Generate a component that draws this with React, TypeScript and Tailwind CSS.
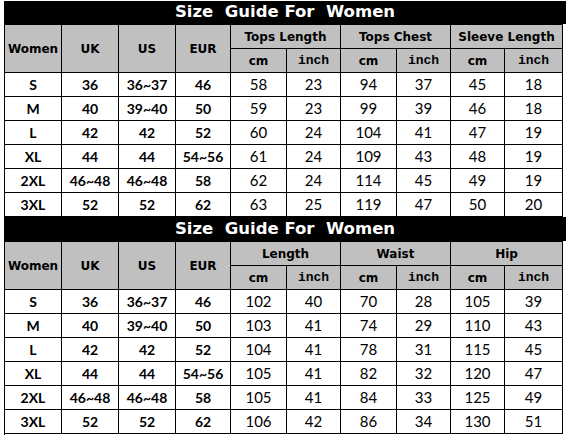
import React from 'react';

type Row = [string, string, string, string, number, number, number, number, number, number];

const sizes = ['S', 'M', 'L', 'XL', '2XL', '3XL'];
const uk = ['36', '40', '42', '44', '46~48', '52'];
const us = ['36~37', '39~40', '42', '44', '46~48', '52'];
const eur = ['46', '50', '52', '54~56', '58', '62'];

const tops: number[][] = [
  [58, 23, 94, 37, 45, 18],
  [59, 23, 99, 39, 46, 18],
  [60, 24, 104, 41, 47, 19],
  [61, 24, 109, 43, 48, 19],
  [62, 24, 114, 45, 49, 19],
  [63, 25, 119, 47, 50, 20],
];

const bottoms: number[][] = [
  [102, 40, 70, 28, 105, 39],
  [103, 41, 74, 29, 110, 43],
  [104, 41, 78, 31, 115, 45],
  [105, 41, 82, 32, 120, 47],
  [105, 41, 84, 33, 125, 49],
  [106, 42, 86, 34, 130, 51],
];

const build = (m: number[][]): Row[] =>
  m.map((r, i) => [sizes[i], uk[i], us[i], eur[i], ...r] as Row);

const colWidths = [57, 57, 57, 55, 56, 54, 56, 54, 54, 58];

const head = "font-['DejaVu_Sans',sans-serif] font-bold text-[12px] text-black";
const cell = 'border border-black text-center p-0';

function SizeTable({ groups, rows, titleH }: { groups: string[]; rows: Row[]; titleH: string }) {
  return (
    <div>
      <div className={`${titleH} bg-black flex items-center justify-center`}>
        <span className="whitespace-pre text-white font-['DejaVu_Sans',sans-serif] font-bold text-[16.5px] leading-none">
          {'Size  Guide For  Women'}
        </span>
      </div>
      <table className="table-fixed border-collapse w-[558px]">
        <colgroup>
          {colWidths.map((w, i) => (
            <col key={i} style={{ width: w }} />
          ))}
        </colgroup>
        <thead>
          <tr className="h-[24px] bg-[#c0c0c0]">
            {['Women', 'UK', 'US', 'EUR'].map((h) => (
              <th key={h} rowSpan={2} className={`${cell} ${head}`}>
                {h}
              </th>
            ))}
            {groups.map((g) => (
              <th key={g} colSpan={2} className={`${cell} ${head}`}>
                {g}
              </th>
            ))}
          </tr>
          <tr className="h-[24px] bg-[#c0c0c0]">
            {groups.map((g) => (
              <React.Fragment key={g}>
                <th className={`${cell} ${head}`}>cm</th>
                <th className={`${cell} font-['Liberation_Mono',monospace] font-bold text-[13px]`}>inch</th>
              </React.Fragment>
            ))}
          </tr>
        </thead>
        <tbody>
          {rows.map((r) => (
            <tr key={r[0]} className="h-[24px] bg-white">
              {r.map((v, i) => (
                <td
                  key={i}
                  className={`${cell} text-black leading-none ${
                    i < 4
                      ? "font-['Lato',sans-serif] font-bold text-[14px]"
                      : "font-['Lato',sans-serif] text-[15px]"
                  }`}
                >
                  {v}
                </td>
              ))}
            </tr>
          ))}
        </tbody>
      </table>
    </div>
  );
}

export default function App() {
  return (
    <div className="w-[566px] h-[435px] bg-white pt-[1px] pl-[4px] overflow-hidden">
      <SizeTable groups={['Tops Length', 'Tops Chest', 'Sleeve Length']} rows={build(tops)} titleH="h-[23px]" />
      <SizeTable groups={['Length', 'Waist', 'Hip']} rows={build(bottoms)} titleH="h-[24px]" />
      <div className="h-[4px] border-l border-black" />
    </div>
  );
}
